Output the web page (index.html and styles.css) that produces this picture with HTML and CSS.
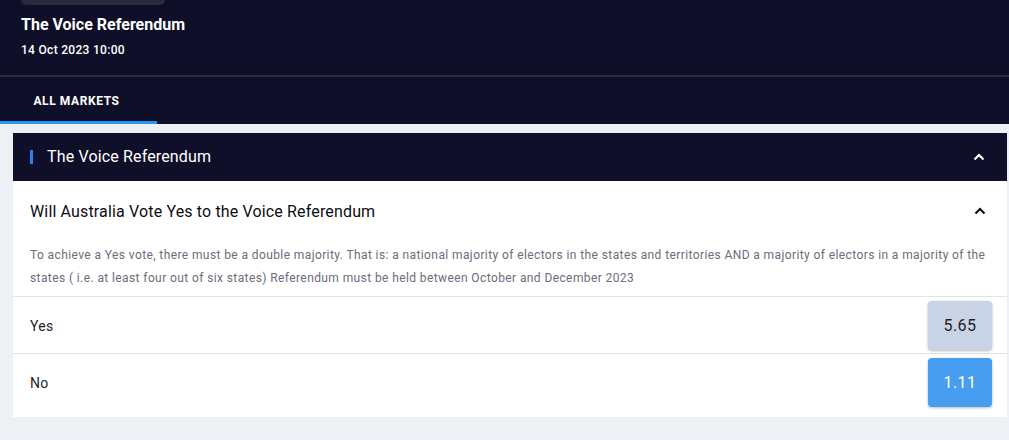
FILE: index.html
```html
<!DOCTYPE html>
<html>
<head>
<meta charset="utf-8">
<link rel="stylesheet" href="styles.css">
</head>
<body>
<header class="event-header">
  <div class="event-info">
    <div class="ghost-btn"></div>
    <div class="event-title">The Voice Referendum</div>
    <div class="event-date">14 Oct 2023 10:00</div>
  </div>
  <nav class="tabs">
    <div class="tab active">ALL MARKETS</div>
  </nav>
</header>
<main class="content">
  <section class="card">
    <div class="card-head">
      <span class="accent"></span>
      <span class="card-title">The Voice Referendum</span>
      <svg class="chev" width="12" height="8" viewBox="0 0 12 8"><polyline points="1.5,6.5 6,2 10.5,6.5" fill="none" stroke="#fff" stroke-width="2.2"/></svg>
    </div>
    <div class="market">
      <div class="market-head">
        <span class="market-title">Will Australia Vote Yes to the Voice Referendum</span>
        <svg class="chev" width="12" height="8" viewBox="0 0 12 8"><polyline points="1.5,6.5 6,2 10.5,6.5" fill="none" stroke="#111" stroke-width="2.2"/></svg>
      </div>
      <p class="market-desc">To achieve a Yes vote, there must be a double majority. That is: a national majority of electors in the states and territories AND a majority of electors in a majority of the states ( i.e. at least four out of six states) Referendum must be held between October and December 2023</p>
      <div class="runner">
        <span class="runner-name">Yes</span>
        <button class="price">5.65</button>
      </div>
      <div class="runner">
        <span class="runner-name">No</span>
        <button class="price fav">1.11</button>
      </div>
    </div>
  </section>
</main>
</body>
</html>
```
FILE: styles.css
```css
* { box-sizing: border-box; }
html, body { margin: 0; padding: 0; }
body {
  background: #edf0f5;
  font-family: Roboto, "Noto Sans", sans-serif;
  width: 1009px;
  height: 440px;
  overflow: hidden;
}
.event-header { background: #0f0f29; color: #fff; }
.event-info {
  padding: 0 21px;
  height: 77px;
  border-bottom: 2px solid #2c2c42;
}
.ghost-btn {
  width: 144px;
  height: 5px;
  background: #2a2a3f;
  border-radius: 0 0 6px 6px;
}
.event-title {
  margin-top: 10px;
  font-size: 16px;
  font-weight: 700;
  line-height: 20px;
}
.event-date {
  margin-top: 7px;
  font-size: 12px;
  font-weight: 500;
  line-height: 16px;
  letter-spacing: 0.3px;
}
.tabs { display: flex; height: 47px; }
.tab {
  width: 157px;
  display: flex;
  align-items: center;
  justify-content: center;
  padding-right: 4px;
  font-size: 12px;
  font-weight: 700;
  letter-spacing: 0.6px;
  border-bottom: 3px solid transparent;
  padding-top: 3px;
}
.tab.active { border-bottom-color: #2196f3; }
.content { padding: 9px 2px 0 13px; }
.card { background: #fff; padding-bottom: 7px; }
.card-head {
  height: 48px;
  background: #0f0f29;
  color: #fff;
  display: flex;
  align-items: center;
  padding: 0 22px 0 17px;
}
.accent {
  width: 3px;
  height: 14px;
  background: #2f80ed;
  margin-right: 14px;
}
.card-title { font-size: 16px; flex: 1; line-height: 20px; letter-spacing: 0.15px; }
.chev { display: block; }
.market-head {
  height: 60px;
  display: flex;
  align-items: center;
  padding: 0 21px 0 17px;
}
.market-title {
  flex: 1;
  font-size: 16px;
  font-weight: 400;
  letter-spacing: 0.15px;
  color: #0d0d14;
}
.market-desc {
  margin: 0;
  padding: 3px 20px 6px 17px;
  font-size: 12px;
  line-height: 23px;
  letter-spacing: 0.4px;
  color: #6d6b7c;
}
.runner {
  border-top: 1px solid #e2e3ea;
  display: flex;
  align-items: center;
  padding: 4px 15px 3px 17px;
}
.runner-name { flex: 1; font-size: 14px; letter-spacing: 0.25px; color: #1e1e26; }
.price {
  width: 64px;
  height: 49px;
  border: none;
  border-radius: 4px;
  background: #c8d3e6;
  color: #1f1f26;
  font-family: Roboto, sans-serif;
  font-size: 16px;
  letter-spacing: 0.5px;
  box-shadow: 0 1px 3px rgba(0,0,0,0.28);
}
.price.fav { background: #479ef0; color: #fff; }
```
